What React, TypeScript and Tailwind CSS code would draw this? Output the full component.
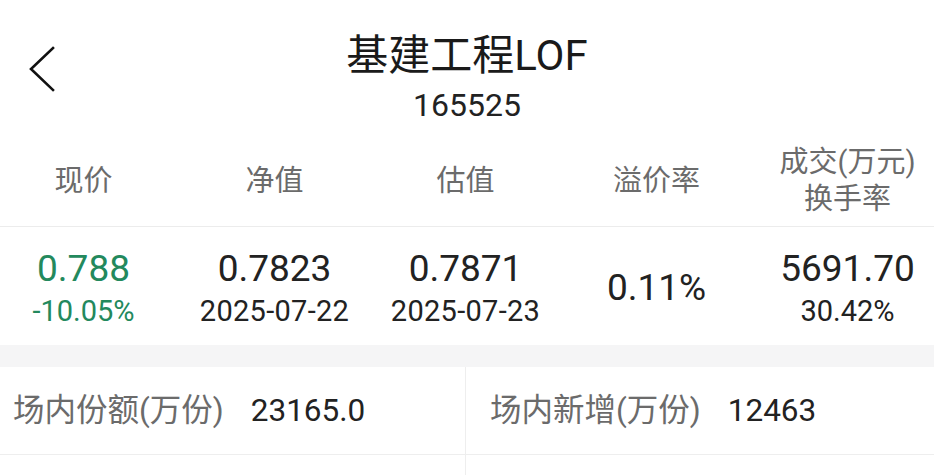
import React from "react";

const FONT = "[font-family:Roboto,'Noto_Sans_CJK_SC',sans-serif]";

function Col({ children, className = "" }: { children: React.ReactNode; className?: string }) {
  return (
    <div className={`w-[191px] shrink-0 flex flex-col items-center justify-center ${className}`}>
      {children}
    </div>
  );
}

export default function App() {
  return (
    <div className={`w-[934px] h-[475px] overflow-hidden bg-white text-[#222] ${FONT}`}>
      {/* Header */}
      <div className="grid grid-cols-[1fr_auto_1fr]">
        <div className="pl-[28px] pt-[46px]">
          <svg width="28" height="46" viewBox="0 0 28 46" fill="none">
            <path d="M25 2 L3 23 L25 44" stroke="#111" strokeWidth="2.6" strokeLinecap="square" strokeLinejoin="miter" />
          </svg>
        </div>
        <div className="flex flex-col items-center pt-[35px]">
          <div className="text-[42px] leading-[42px] text-[#1a1a1a]">基建工程LOF</div>
          <div className="mt-[12px] text-[32px] leading-[32px] text-[#222]">165525</div>
        </div>
        <div />
      </div>

      {/* Column labels */}
      <div className="mt-[15px] h-[91px] flex -ml-[12px] text-[29px] text-[#6b6b6b] border-b border-[#ececec]">
        <Col><span className="leading-[37px]">现价</span></Col>
        <Col><span className="leading-[37px]">净值</span></Col>
        <Col><span className="leading-[37px]">估值</span></Col>
        <Col><span className="leading-[37px]">溢价率</span></Col>
        <Col>
          <span className="leading-[37px]">成交(万元)</span>
          <span className="leading-[37px]">换手率</span>
        </Col>
      </div>

      {/* Values */}
      <div className="h-[118px] flex -ml-[12px]">
        <Col className="text-[#23895d]">
          <span className="text-[37px] leading-[50px]">0.788</span>
          <span className="text-[29px] leading-[34px]">-10.05%</span>
        </Col>
        <Col>
          <span className="text-[37px] leading-[50px]">0.7823</span>
          <span className="text-[29px] leading-[34px] tracking-[0.3px]">2025-07-22</span>
        </Col>
        <Col>
          <span className="text-[37px] leading-[50px]">0.7871</span>
          <span className="text-[29px] leading-[34px] tracking-[0.3px]">2025-07-23</span>
        </Col>
        <Col>
          <span className="mt-[4px] text-[37px] leading-[50px]">0.11%</span>
        </Col>
        <Col>
          <span className="text-[37px] leading-[50px]">5691.70</span>
          <span className="text-[29px] leading-[34px]">30.42%</span>
        </Col>
      </div>

      {/* Gray band */}
      <div className="h-[22px] bg-[#f5f5f6]" />

      {/* Info grid */}
      <div className="grid grid-cols-[466px_1fr] text-[31.5px]">
        <div className="h-[88px] flex items-center pl-[13px] border-r border-b border-[#eeeeee]">
          <span className="text-[#6b6b6b]">场内份额(万份)</span>
          <span className="ml-[27px] text-[#222]">23165.0</span>
        </div>
        <div className="h-[88px] flex items-center pl-[24px] border-b border-[#eeeeee]">
          <span className="text-[#6b6b6b]">场内新增(万份)</span>
          <span className="ml-[27px] text-[#222]">12463</span>
        </div>
        <div className="h-[40px] border-r border-[#eeeeee]" />
        <div className="h-[40px]" />
      </div>
    </div>
  );
}
